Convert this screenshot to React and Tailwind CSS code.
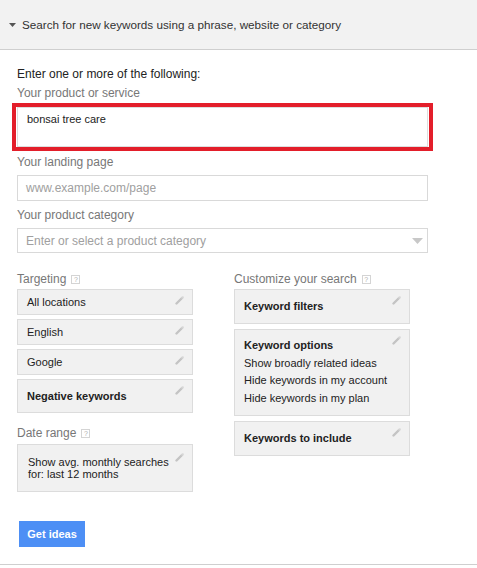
const font = { fontFamily: '"Liberation Sans", Arial, sans-serif' };

function Pencil() {
  return (
    <svg width="9" height="9" viewBox="0 0 9 9" className="shrink-0">
      <path d="M1.5 7.5 L7 2" stroke="#c4c4c4" strokeWidth="2.4" strokeLinecap="round" />
      <path d="M7.2 1.8 L7.8 1.2" stroke="#d6d6d6" strokeWidth="2" strokeLinecap="round" />
    </svg>
  );
}

function Help() {
  return (
    <span className="ml-[5px] inline-flex h-[9px] w-[9px] items-center justify-center border border-[#d4d4d4] text-[7px] leading-none text-[#b0b0b0]">
      ?
    </span>
  );
}

function Label({ children, help, className = '' }) {
  return (
    <div className={`flex items-center text-[12px] leading-[15px] text-[#777] ${className}`}>
      {children}
      {help && <Help />}
    </div>
  );
}

function Chip({ children, className = '', bold }) {
  return (
    <div
      className={`flex w-[176px] justify-between border border-[#dcdcdc] bg-[#f1f1f1] pl-[9px] pr-[8px] text-[11px] text-[#222] ${bold ? 'font-bold' : ''} ${className}`}
    >
      <div className="self-center">{children}</div>
      <div className="pt-[6px]">
        <Pencil />
      </div>
    </div>
  );
}

export default function App() {
  return (
    <div className="h-[568px] w-[477px] bg-white" style={font}>
      <div className="flex h-[50px] items-center border-b border-[#cfcfcf] bg-[#f2f2f2] pl-[9px]">
        <svg width="7" height="4" viewBox="0 0 7 4" className="mr-[6px] mt-[1px]">
          <path d="M0 0 H7 L3.5 4 Z" fill="#555" />
        </svg>
        <span className="text-[11.7px] text-[#333]">Search for new keywords using a phrase, website or category</span>
      </div>

      <div className="pl-[17px] pt-[17px]">
        <div className="text-[12px] leading-[15px] text-[#222]">Enter one or more of the following:</div>
        <Label className="mt-[4px]">Your product or service</Label>

        <div className="-ml-[5px] mt-[2px] h-[48px] w-[421px] border-4 border-[#e31e2a] px-[1px]">
          <div className="h-full border border-[#dedede] bg-white pl-[9px] pt-[4px] text-[11px] leading-[14px] text-[#222]">
            bonsai tree care
          </div>
        </div>

        <Label className="mt-[4px]">Your landing page</Label>
        <div className="mt-[5px] flex h-[26px] w-[411px] items-center border border-[#d9d9d9] pl-[8px] text-[12px] text-[#a0a0a0]">
          www.example.com/page
        </div>

        <Label className="mt-[7px]">Your product category</Label>
        <div className="mt-[5px] flex h-[25px] w-[411px] items-center justify-between border border-[#d9d9d9] pl-[8px] pr-[4px] text-[12px] text-[#a0a0a0]">
          <span>Enter or select a product category</span>
          <svg width="11" height="6" viewBox="0 0 11 6">
            <path d="M0 0 H11 L5.5 6 Z" fill="#c8c8c8" />
          </svg>
        </div>

        <div className="mt-[19px] grid grid-cols-[217px_176px]">
          <div>
            <Label help>Targeting</Label>
            <div className="mt-[2px] flex flex-col gap-[4px]">
              <Chip className="h-[26px]">All locations</Chip>
              <Chip className="h-[26px]">English</Chip>
              <Chip className="h-[26px]">Google</Chip>
              <Chip className="h-[34px]" bold>
                Negative keywords
              </Chip>
            </div>

            <Label help className="mt-[13px]">
              Date range
            </Label>
            <div className="mt-[3px] flex h-[48px] w-[176px] justify-between border border-[#dcdcdc] bg-[#f1f1f1] pl-[10px] pr-[8px] pt-[11px] text-[11px] leading-[12px] text-[#222]">
              <div>
                Show avg. monthly searches
                <br />
                for: last 12 months
              </div>
              <div className="-mt-[3px]">
                <Pencil />
              </div>
            </div>
          </div>

          <div>
            <Label help>Customize your search</Label>
            <div className="mt-[2px] flex flex-col gap-[5px]">
              <Chip className="h-[35px]" bold>
                Keyword filters
              </Chip>
              <div className="flex h-[87px] w-[176px] justify-between border border-[#dcdcdc] bg-[#f1f1f1] pl-[9px] pr-[8px] pt-[7px] text-[11px] leading-[17.5px] text-[#222]">
                <div>
                  <div className="font-bold">Keyword options</div>
                  <div>Show broadly related ideas</div>
                  <div>Hide keywords in my account</div>
                  <div>Hide keywords in my plan</div>
                </div>
                <div className="-mt-[1px]">
                  <Pencil />
                </div>
              </div>
              <Chip className="h-[35px]" bold>
                Keywords to include
              </Chip>
            </div>
          </div>
        </div>

        <button className="ml-[2px] mt-[29px] flex h-[26px] w-[66px] items-center justify-center bg-[#4d8ff5] text-[11px] font-bold text-white">
          Get ideas
        </button>
      </div>

      <div className="mt-[17px] border-b border-[#cfcfcf]" />
    </div>
  );
}
